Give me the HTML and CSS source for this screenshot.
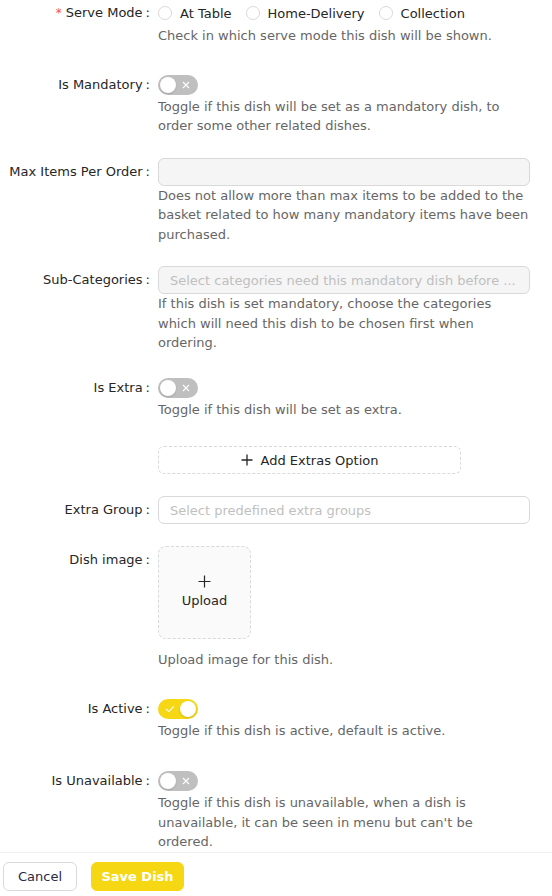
FILE: index.html
```html
<!DOCTYPE html>
<html>
<head>
<meta charset="utf-8">
<link rel="stylesheet" href="styles.css">
</head>
<body>
<div class="form">
  <div class="item item-first">
    <div class="label lh26"><span class="req">*</span>Serve Mode<span class="colon">:</span></div>
    <div class="ctrl">
      <div class="main radios">
        <label class="radio"><span class="circle"></span>At Table</label>
        <label class="radio"><span class="circle"></span>Home-Delivery</label>
        <label class="radio"><span class="circle"></span>Collection</label>
      </div>
      <div class="help">Check in which serve mode this dish will be shown.</div>
    </div>
  </div>

  <div class="item item-toggle">
    <div class="label lh24">Is Mandatory<span class="colon">:</span></div>
    <div class="ctrl">
      <div class="main main24">
        <span class="switch"><span class="knob"></span><svg class="x" width="8" height="8" viewBox="0 0 8 8"><path d="M1 1L7 7M7 1L1 7" stroke="#fff" stroke-width="1.1" fill="none"/></svg></span>
      </div>
      <div class="help">Toggle if this dish will be set as a mandatory dish, to order some other related dishes.</div>
    </div>
  </div>

  <div class="item">
    <div class="label lh28">Max Items Per Order<span class="colon">:</span></div>
    <div class="ctrl">
      <div class="input disabled"></div>
      <div class="help">Does not allow more than max items to be added to the basket related to how many mandatory items have been purchased.</div>
    </div>
  </div>

  <div class="item">
    <div class="label lh28">Sub-Categories<span class="colon">:</span></div>
    <div class="ctrl">
      <div class="input disabled"><span class="ph">Select categories need this mandatory dish before ...</span></div>
      <div class="help">If this dish is set mandatory, choose the categories which will need this dish to be chosen first when ordering.</div>
    </div>
  </div>

  <div class="item item-extra">
    <div class="label lh24">Is Extra<span class="colon">:</span></div>
    <div class="ctrl">
      <div class="main main24">
        <span class="switch"><span class="knob"></span><svg class="x" width="8" height="8" viewBox="0 0 8 8"><path d="M1 1L7 7M7 1L1 7" stroke="#fff" stroke-width="1.1" fill="none"/></svg></span>
      </div>
      <div class="help">Toggle if this dish will be set as extra.</div>
    </div>
  </div>

  <div class="item item-toggle">
    <div class="label"></div>
    <div class="ctrl">
      <div class="dashed-btn"><svg width="12" height="12" viewBox="0 0 12 12"><path d="M6 0.5V11.5M0.5 6H11.5" stroke="#262626" stroke-width="1.3" fill="none"/></svg>Add Extras Option</div>
    </div>
  </div>

  <div class="item">
    <div class="label lh28">Extra Group<span class="colon">:</span></div>
    <div class="ctrl">
      <div class="input"><span class="ph">Select predefined extra groups</span></div>
    </div>
  </div>

  <div class="item">
    <div class="label lh28">Dish image<span class="colon">:</span></div>
    <div class="ctrl">
      <div class="upload">
        <svg width="13" height="13" viewBox="0 0 13 13"><path d="M6.5 0.5V12.5M0.5 6.5H12.5" stroke="#262626" stroke-width="1.2" fill="none"/></svg>
        <span class="upload-text">Upload</span>
      </div>
      <div class="help help-upload">Upload image for this dish.</div>
    </div>
  </div>

  <div class="item item-toggle">
    <div class="label lh24">Is Active<span class="colon">:</span></div>
    <div class="ctrl">
      <div class="main main24">
        <span class="switch on"><svg class="check" width="10" height="8" viewBox="0 0 10 8"><path d="M1 4L3.8 6.6L9 1.2" stroke="#fff" stroke-width="1.1" fill="none"/></svg><span class="knob"></span></span>
      </div>
      <div class="help">Toggle if this dish is active, default is active.</div>
    </div>
  </div>

  <div class="item item-last">
    <div class="label lh24">Is Unavailable<span class="colon">:</span></div>
    <div class="ctrl">
      <div class="main main24">
        <span class="switch"><span class="knob"></span><svg class="x" width="8" height="8" viewBox="0 0 8 8"><path d="M1 1L7 7M7 1L1 7" stroke="#fff" stroke-width="1.1" fill="none"/></svg></span>
      </div>
      <div class="help">Toggle if this dish is unavailable, when a dish is unavailable, it can be seen in menu but can't be ordered.</div>
    </div>
  </div>
</div>

<div class="footer">
  <button class="btn btn-cancel">Cancel</button>
  <button class="btn btn-save">Save Dish</button>
</div>
</body>
</html>
```

FILE: styles.css
```css
* { box-sizing: border-box; }
html, body { margin: 0; padding: 0; background: #fff; }
body {
  font-family: "DejaVu Sans", sans-serif;
  font-size: 13px;
  color: #262626;
  width: 552px;
  overflow: hidden;
}
.form { padding-right: 22px; }
.item {
  display: grid;
  grid-template-columns: 158px 1fr;
  align-items: start;
  margin-top: 22px;
}
.item-first { margin-top: 0; }
.item-toggle { margin-top: 27px; }
.item-extra { margin-top: 23px; }
.item-last { margin-top: 29px; }
.label {
  text-align: right;
  padding-right: 8px;
  white-space: nowrap;
  color: #262626;
}
.lh24 { line-height: 24px; }
.lh26 { line-height: 26px; }
.lh28 { line-height: 28px; }
.req { color: #ff4d4f; margin-right: 4px; font-size: 12px; }
.colon { margin-left: 3px; }
.ctrl { min-width: 0; }
.main { display: flex; align-items: center; }
.radios { height: 26px; gap: 14px; }
.radio { display: flex; align-items: center; gap: 8px; white-space: nowrap; }
.circle {
  width: 14px; height: 14px; border-radius: 50%;
  border: 1px solid #d9d9d9; background: #fff; display: inline-block;
}
.main24 { height: 24px; }
.help {
  color: #666;
  line-height: 19.5px;
}
.switch {
  position: relative;
  width: 40px; height: 20px; border-radius: 10px;
  background: #bfbfbf;
  display: inline-flex; align-items: center;
}
.switch .knob {
  position: absolute; left: 2px; top: 2px;
  width: 16px; height: 16px; border-radius: 50%; background: #fff;
  box-shadow: 0 1px 2px rgba(0,0,0,0.15);
}
.switch .x { position: absolute; left: 24px; top: 6px; }
.switch.on { background: #f5d714; }
.switch.on .knob { left: 22px; }
.switch.on .check { position: absolute; left: 7px; top: 6px; }
.input {
  height: 28px;
  border: 1px solid #d9d9d9;
  border-radius: 6px;
  background: #fff;
  padding: 0 11px;
  display: flex; align-items: center;
  overflow: hidden;
}
.input.disabled { background: #f5f5f5; }
.ph { color: #bfbfbf; white-space: nowrap; overflow: hidden; }
.dashed-btn {
  width: 303px; height: 28px;
  border: 1px dashed #d9d9d9; border-radius: 6px;
  display: flex; align-items: center; justify-content: center; gap: 8px;
  color: #262626;
}
.upload {
  width: 93px; height: 93px;
  border: 1px dashed #d9d9d9; border-radius: 8px;
  background: #fafafa;
  display: flex; flex-direction: column; align-items: center; justify-content: center;
  gap: 4px;
}
.upload-text { line-height: 18px; }
.help-upload { margin-top: 11px; }
.footer {
  border-top: 1px solid #f0f0f0;
  padding: 9px 3px 0;
  display: flex; gap: 14px;
}
.btn {
  font-family: "DejaVu Sans", sans-serif;
  font-size: 13px;
  height: 29px;
  border-radius: 6px;
  cursor: pointer;
}
.btn-cancel {
  width: 74px;
  background: #fff;
  border: 1px solid #d9d9d9;
  color: #2a2a45;
}
.btn-save {
  width: 93px;
  background: #f5d714;
  border: 1px solid #f5d714;
  color: #fff;
  font-weight: 600;
}
```
